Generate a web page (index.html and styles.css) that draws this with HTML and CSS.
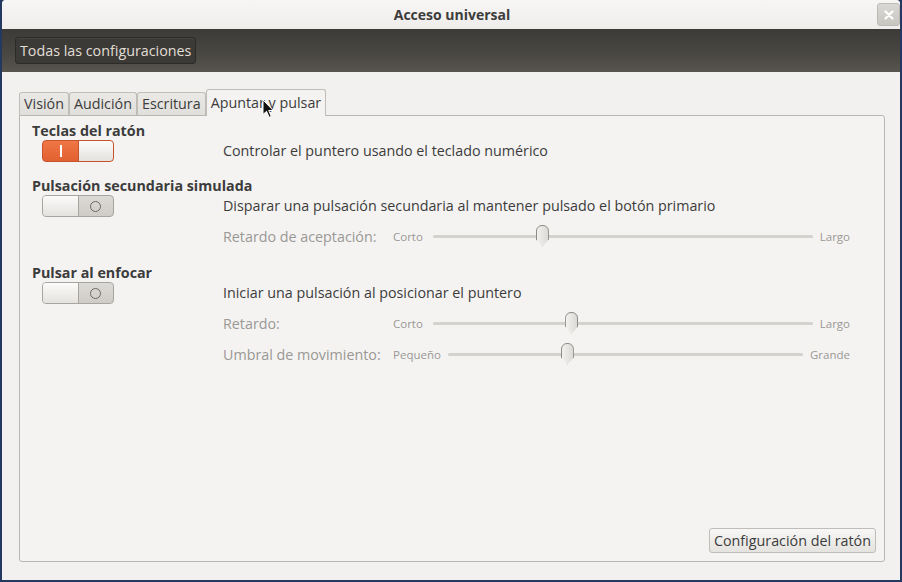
FILE: index.html
```html
<!DOCTYPE html>
<html lang="es">
<head>
<meta charset="utf-8">
<title>Acceso universal</title>
<link rel="stylesheet" href="styles.css">
</head>
<body>
<div class="window">
  <header class="titlebar">
    <span class="title">Acceso universal</span>
    <span class="close" aria-label="Cerrar">
      <svg width="10" height="10" viewBox="0 0 10 10"><path d="M1.5 1.5 L8.5 8.5 M8.5 1.5 L1.5 8.5" stroke="#fff" stroke-width="2.2" stroke-linecap="round"/></svg>
    </span>
  </header>
  <div class="toolbar">
    <button class="tb-button">Todas las configuraciones</button>
  </div>
  <main class="content">
    <nav class="tabs">
      <span class="tab">Visión</span>
      <span class="tab">Audición</span>
      <span class="tab">Escritura</span>
      <span class="tab active">Apuntar y pulsar</span>
    </nav>
    <section class="page">
      <div class="group g1">
        <div class="group-title">Teclas del ratón</div>
        <div class="row">
          <div class="switch on"><span class="lamp"></span><span class="knob"></span></div>
          <div class="stack">
            <div class="desc">Controlar el puntero usando el teclado numérico</div>
          </div>
        </div>
      </div>
      <div class="group g2">
        <div class="group-title">Pulsación secundaria simulada</div>
        <div class="row">
          <div class="switch off"><span class="knob"></span><span class="ring"></span></div>
          <div class="stack">
            <div class="desc">Disparar una pulsación secundaria al mantener pulsado el botón primario</div>
            <div class="slider-row sr1">
              <span class="s-label">Retardo de aceptación:</span>
              <span class="s-min">Corto</span>
              <span class="track"><span class="thumb" style="left: 28.7%"></span></span>
              <span class="s-max">Largo</span>
            </div>
          </div>
        </div>
      </div>
      <div class="group g3">
        <div class="group-title">Pulsar al enfocar</div>
        <div class="row">
          <div class="switch off"><span class="knob"></span><span class="ring"></span></div>
          <div class="stack">
            <div class="desc">Iniciar una pulsación al posicionar el puntero</div>
            <div class="slider-row sr2">
              <span class="s-label">Retardo:</span>
              <span class="s-min">Corto</span>
              <span class="track"><span class="thumb" style="left: 36.4%"></span></span>
              <span class="s-max">Largo</span>
            </div>
            <div class="slider-row sr3">
              <span class="s-label">Umbral de movimiento:</span>
              <span class="s-min">Pequeño</span>
              <span class="track"><span class="thumb" style="left: 33.5%"></span></span>
              <span class="s-max">Grande</span>
            </div>
          </div>
        </div>
      </div>
      <div class="footer">
        <button class="btn">Configuración del ratón</button>
      </div>
    </section>
  </main>
  <svg class="cursor" width="13" height="20" viewBox="0 0 13 20"><path d="M1 1 L1 15.5 L4.5 12.3 L7.2 18.3 L9.3 17.4 L6.7 11.5 L11.3 11.5 Z" fill="#111" stroke="#fff" stroke-width="1"/></svg>
</div>
</body>
</html>
```

FILE: styles.css
```css
* { box-sizing: border-box; }
html, body { margin: 0; padding: 0; }
body {
  background: #23395f;
  width: 902px;
  height: 582px;
  overflow: hidden;
  font-family: "Open Sans", "Noto Sans", sans-serif;
  font-size: 14.3px;
  color: #3c3c3c;
}
.window {
  position: relative;
  margin-left: 2px;
  width: 898px;
  height: 580px;
  background: #f2f1f0;
  border-radius: 4px 4px 0 0;
  display: flex;
  flex-direction: column;
  overflow: hidden;
}
.titlebar {
  height: 29px;
  flex: none;
  display: flex;
  align-items: center;
  justify-content: center;
  position: relative;
  background: linear-gradient(#f7f6f5, #eeedeb);
}
.title {
  font-weight: bold;
  font-size: 14px;
  color: #3c3c3c;
  margin-left: 2px;
}
.close {
  position: absolute;
  right: 0;
  top: 3px;
  width: 23px;
  height: 23px;
  border-radius: 3px;
  background: linear-gradient(#dad8d4, #c8c6c1);
  border: 1px solid #bdbab5;
  display: flex;
  align-items: center;
  justify-content: center;
}
.toolbar {
  height: 43px;
  flex: none;
  background: linear-gradient(#3c3b37, #4a4843 60%, #58554e);
  display: flex;
  align-items: center;
  padding-left: 13px;
}
.tb-button {
  height: 27px;
  padding: 0 4px;
  font: inherit;
  color: #e2ded6;
  background: #3b3a36;
  border: 1px solid #2c2b28;
  border-radius: 3px;
  box-shadow: inset 0 1px 0 rgba(255,255,255,0.05);
  margin-top: -1px;
}
.content {
  flex: 1;
  display: flex;
  flex-direction: column;
  padding: 17px 15px 18px 17px;
}
.tabs {
  display: flex;
  align-items: flex-end;
  height: 26px;
  position: relative;
  z-index: 1;
}
.tab {
  height: 23px;
  line-height: 21px;
  padding: 0 4px;
  border: 1px solid #c0bdb8;
  border-bottom: none;
  border-radius: 3px 3px 0 0;
  background: linear-gradient(#ebe9e6, #e1dfdb);
  color: #3c3c3c;
}
.tab + .tab { margin-left: -0px; }
.tab.active {
  height: 27px;
  line-height: 25px;
  padding: 0 4px;
  background: #f4f3f2;
  margin-bottom: -1px;
}
.page {
  flex: 1;
  border: 1px solid #b9b6b1;
  border-radius: 0 3px 3px 3px;
  background: #f4f3f2;
  padding: 6px 8px 8px 12px;
  display: flex;
  flex-direction: column;
}
.group-title {
  font-weight: bold;
  height: 17px;
  line-height: 17px;
}
.g2 { margin-top: 15px; }
.g3 { margin-top: 17px; }
.row {
  display: grid;
  grid-template-columns: 191px 1fr;
  margin-top: 1px;
  padding-right: 26px;
}
.stack { display: flex; flex-direction: column; }
.desc {
  height: 22px;
  line-height: 22px;
  white-space: nowrap;
}
.switch {
  margin-left: 10px;
  width: 72px;
  height: 22px;
  border-radius: 4px;
  display: flex;
  overflow: hidden;
}
.switch.on {
  background: linear-gradient(#f07746, #e2602f);
  border: 1px solid #c5542c;
}
.switch.on .lamp {
  width: 35px;
  display: flex;
  align-items: center;
  justify-content: center;
}
.switch.on .lamp::before {
  content: "";
  width: 2px;
  height: 12px;
  background: #fff;
}
.switch .knob {
  width: 35px;
  background: linear-gradient(#fbfbfa, #e4e2de);
}
.switch.on .knob { border-left: 1px solid #c5542c; flex: 1; border-radius: 0 3px 3px 0; }
.switch.off {
  background: linear-gradient(#dcdad6, #cfccc7);
  border: 1px solid #a8a5a0;
}
.switch.off .knob { border-right: 1px solid #a8a5a0; width: 36px; }
.switch.off .ring {
  flex: 1;
  display: flex;
  align-items: center;
  justify-content: center;
}
.switch.off .ring::before {
  content: "";
  width: 9px;
  height: 9px;
  border: 1px solid #6a6864;
  border-radius: 50%;
  margin-left: -1px;
}
.slider-row {
  display: flex;
  align-items: center;
  height: 22px;
  color: #9a9894;
  white-space: nowrap;
}
.sr1 { margin-top: 8px; }
.sr2 { margin-top: 8px; }
.sr3 { margin-top: 9px; }
.s-label { width: 170px; flex: none; }
.s-min, .s-max { font-size: 11.5px; flex: none; }
.track {
  flex: 1;
  position: relative;
  height: 3px;
  margin: 0 7px;
  background: #d4d2ce;
  border-radius: 2px;
}
.sr1 .s-min, .sr2 .s-min { margin-right: 3px; }
.thumb {
  position: absolute;
  top: -10px;
  width: 13px;
  height: 22px;
  margin-left: -6px;
  background: linear-gradient(90deg, #f2f1ef, #dcdad6);
  border: 1px solid #8e8c88;
  border-radius: 6px 6px 0 0;
  clip-path: polygon(0 0, 100% 0, 100% 68%, 50% 100%, 0 68%);
}
.footer {
  margin-top: auto;
  display: flex;
  justify-content: flex-end;
}
.btn {
  font: inherit;
  height: 25px;
  padding: 0 4px;
  color: #3c3c3c;
  background: linear-gradient(#f7f7f6, #e5e3df);
  border: 1px solid #c0bdb8;
  border-radius: 3px;
}
.cursor {
  position: absolute;
  z-index: 10;
  left: 260px;
  top: 99px;
}
```
